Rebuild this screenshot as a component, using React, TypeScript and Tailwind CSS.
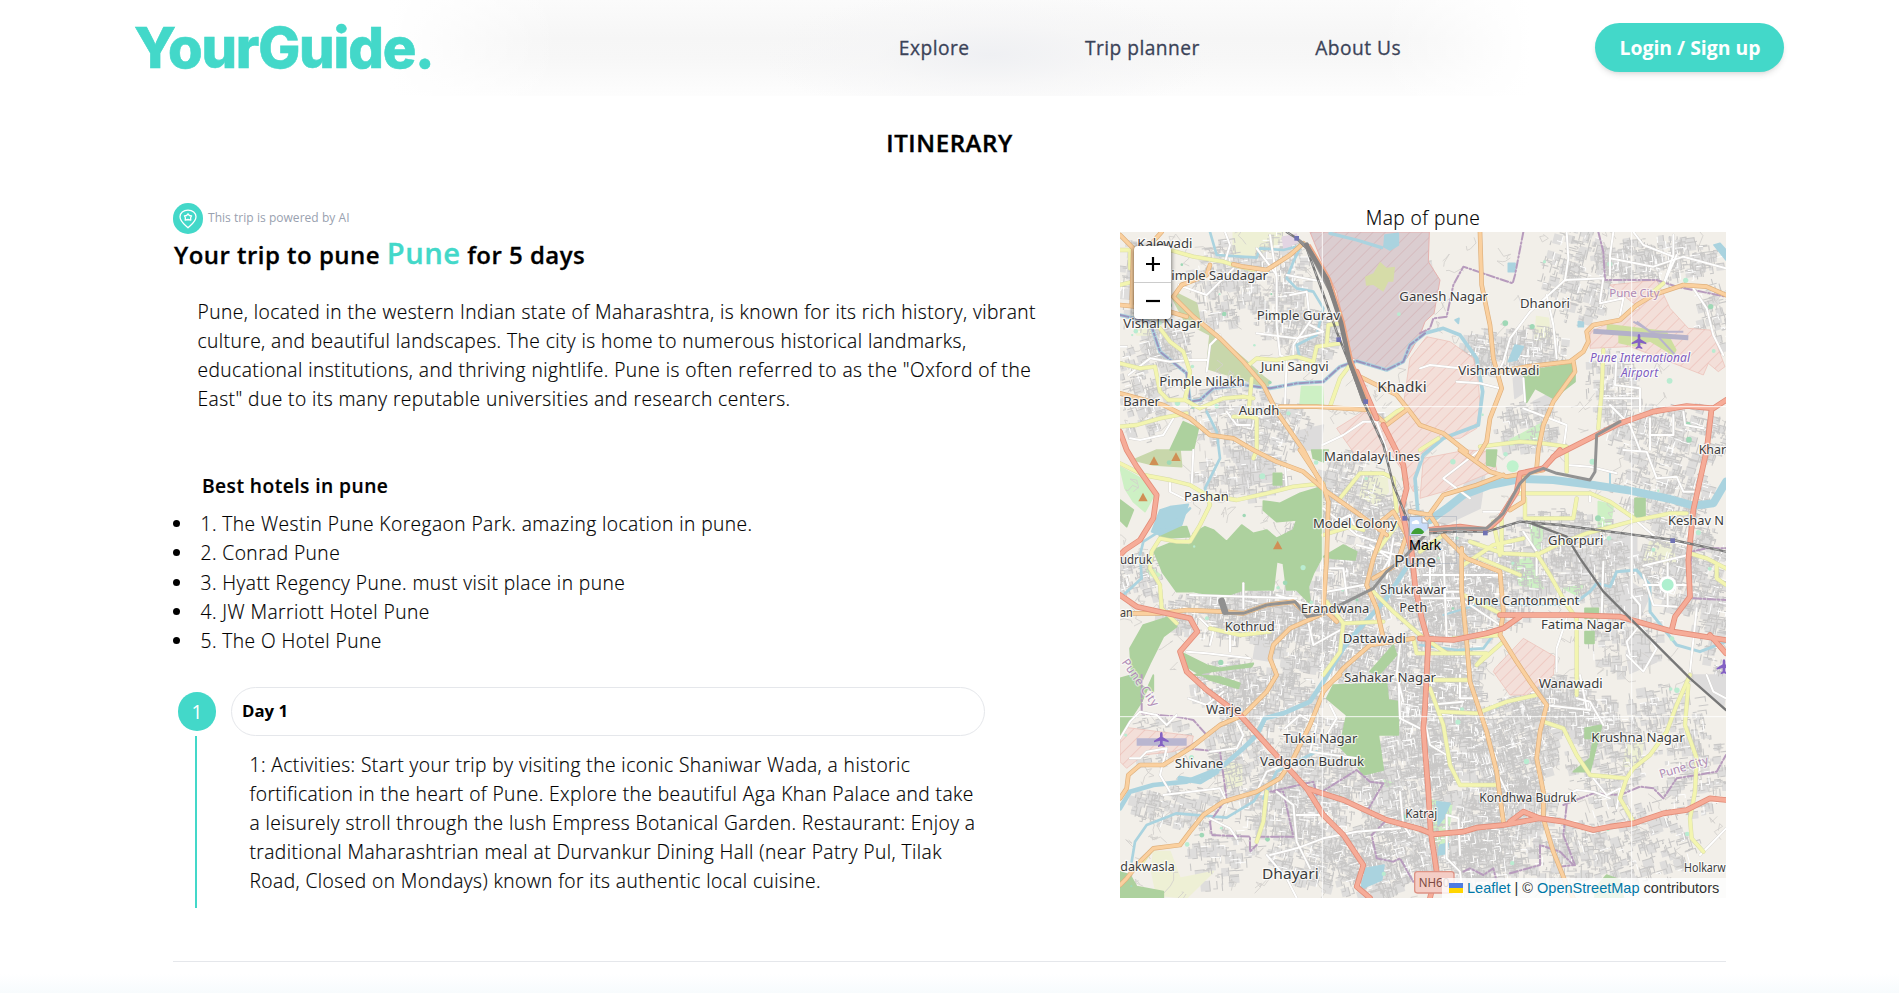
type Pt = string;

const rand = (seed: number) => () => {
  seed = (seed * 1664525 + 1013904223) % 4294967296;
  return seed / 4294967296;
};

// Built-up districts: cx, cy, rx, ry, density
const districts: [number, number, number, number, number][] = [
  [330, 170, 70, 110, 90], [500, 180, 70, 140, 150], [600, 330, 60, 70, 90], [90, 180, 60, 120, 60],
  [170, 350, 60, 60, 60], [360, 560, 110, 90, 90], [500, 600, 90, 70, 70], [100, 480, 70, 120, 70],
  [1260, 370, 90, 60, 120], [1110, 380, 40, 60, 60], [1400, 150, 90, 120, 110], [1640, 100, 160, 60, 170],
  [1800, 280, 50, 100, 40], [1500, 480, 60, 90, 80], [1250, 600, 80, 60, 60], [1680, 620, 160, 80, 160],
  [800, 620, 60, 50, 60], [390, 740, 120, 60, 80], [720, 800, 80, 110, 160], [560, 960, 40, 60, 40],
  [440, 1160, 240, 70, 340], [620, 1230, 120, 90, 200], [740, 1080, 110, 90, 220], [840, 950, 90, 120, 240],
  [960, 1090, 150, 90, 320], [1100, 1100, 150, 110, 280], [1350, 980, 160, 110, 260], [1000, 960, 80, 60, 80],
  [760, 1290, 120, 80, 170], [980, 1320, 110, 120, 260], [1500, 1060, 100, 90, 90], [1720, 1010, 110, 120, 200],
  [1650, 800, 130, 80, 110], [1820, 1200, 50, 120, 60], [470, 1420, 130, 80, 190], [350, 1370, 90, 60, 90],
  [640, 1600, 150, 110, 240], [1000, 1500, 110, 150, 360], [880, 1690, 120, 140, 300], [1200, 1560, 110, 120, 330],
  [1080, 1880, 130, 80, 300], [1180, 1740, 120, 80, 240], [1330, 1420, 100, 60, 140], [1440, 1480, 80, 60, 120],
  [800, 1900, 120, 90, 220], [560, 1740, 140, 90, 190], [380, 1600, 80, 110, 100], [210, 1740, 130, 50, 70],
  [1480, 1600, 100, 110, 100], [1650, 1480, 110, 90, 80], [1350, 1880, 120, 90, 90], [1560, 1850, 160, 110, 110],
  [1740, 1640, 100, 110, 80], [640, 1880, 130, 80, 130], [340, 1880, 90, 80, 50], [130, 1540, 90, 60, 40],
  [90, 1050, 60, 60, 50], [1540, 1240, 90, 90, 60], [900, 120, 40, 60, 20], [900, 1440, 100, 60, 120],
];

const streets = (() => {
  const r = rand(77);
  let light = "";
  let dark = "";
  let block = "";
  districts.forEach(([cx, cy, rx, ry, n]) => {
    const tilt = (r() - 0.5) * 0.6;
    for (let i = 0; i < n * 2; i++) {
      const a = r() * 6.283;
      const q = Math.pow(r(), 0.6);
      const x = cx + Math.cos(a) * rx * q * 1.2;
      const y = cy + Math.sin(a) * ry * q * 1.2;
      const t = tilt + (r() > 0.5 ? 1.571 : 0);
      const l = 8 + r() * 24;
      const dx = Math.cos(t) * l;
      const dy = Math.sin(t) * l;
      const s = `M${x.toFixed(0)} ${y.toFixed(0)}l${dx.toFixed(0)} ${dy.toFixed(0)}${r() > 0.6 ? `l${(-dy / 2).toFixed(0)} ${(dx / 2).toFixed(0)}` : ""}`;
      if (r() > 0.9) light += s;
      else dark += s;
      if (i % 3 === 0) block += `M${x.toFixed(0)} ${y.toFixed(0)}l${dx.toFixed(0)} ${dy.toFixed(0)}l${(-dy * 0.9).toFixed(0)} ${(dx * 0.9).toFixed(0)}l${(-dx).toFixed(0)} ${(-dy).toFixed(0)}z`;
    }
  });
  return { light, dark, block };
})();

const lanes = (() => {
  const r = rand(9);
  let d = "";
  for (let i = 0; i < 420; i++) {
    let x = 30 + r() * 1818;
    let y = 21 + r() * 1998;
    d += `M${x.toFixed(0)} ${y.toFixed(0)}`;
    for (let k = 0; k < 4; k++) {
      x = (r() - 0.5) * 50;
      y = (r() - 0.5) * 50;
      d += `l${x.toFixed(0)} ${y.toFixed(0)}`;
    }
  }
  return d;
})();

const forests: Pt[] = [
  "130,975 180,955 240,960 250,925 285,905 310,915 350,950 395,900 430,925 470,915 500,940 550,915 560,885 500,890 460,855 460,828 510,835 570,805 637,785 637,995 610,1045 595,1085 600,1135 560,1095 530,1095 520,1015 500,1010 490,1095 400,1095 340,1115 250,1100 200,1100 160,1045",
  "30,825 70,855 50,905 30,885", "145,910 230,905 240,935 150,940",
  "100,1200 180,1175 200,1205 160,1235 120,1315 90,1380 130,1400 130,1350 95,1430 30,1530 30,1360 65,1350 60,1270",
  "210,1280 290,1320 330,1330 430,1315 425,1325 300,1340 250,1350 330,1355 390,1375 385,1390 300,1365 230,1325",
  "670,1380 830,1375 835,1425 865,1430 865,1530 805,1530 820,1635 760,1650 740,1620 690,1565 710,1470 650,1420",
  "640,995 700,960 740,980 735,1005 670,1000", "780,1340 850,1260 860,1290 810,1345",
  "1240,440 1395,415 1395,470 1330,520 1275,490 1250,532 1245,500", "1425,1150 1465,1150 1465,1180 1425,1180",
  "1425,1220 1452,1220 1452,1255 1425,1255", "1575,820 1605,820 1605,875 1575,875",
  "1130,675 1160,675 1155,725 1130,720", "605,675 655,675 640,710 610,700", "1425,1510 1475,1500 1455,1580 1440,1640 1390,1640 1440,1600 1450,1540 1425,1540",
  "30,1940 60,1950 80,1985 160,2000 160,2019 30,2019", "1455,1990 1490,1950 1530,1965 1540,2019 1455,2019",
  "180,675 220,590 265,610 250,675", "490,745 515,745 515,780 490,780",
];

const sages: Pt[] = [
  "185,215 200,205 260,235 270,290 400,400 460,455 480,470 470,490 420,470 290,430 300,330 225,290",
  "70,705 140,675 210,675 215,725 130,720", "360,1025 410,1015 405,1065 375,1070",
];

const meadows: Pt[] = [
  "370,21 520,21 500,60 440,90 370,90", "760,760 830,755 835,800 800,840 750,815", "1280,275 1315,280 1320,340 1275,345",
  "130,1880 180,1880 210,1960 310,1940 230,2019 140,2010 125,1940", "340,1610 395,1620 395,1680 350,1690",
  "1620,950 1680,955 1700,1010 1600,1010", "1550,1560 1600,1550 1590,1620 1540,1625", "90,260 130,260 120,330 80,330",
];

const limes: Pt[] = [
  "575,485 637,485 640,540 570,540", "1200,645 1295,595 1290,650 1200,660", "1260,900 1300,905 1290,970 1270,970",
  "1200,1010 1260,1000 1300,1090 1230,1080", "30,725 110,770 130,815 105,860 70,830 45,790", "1465,830 1510,840 1500,905 1465,905",
  "965,1725 1025,1740 1010,1860 990,1890 965,1820", "820,1665 850,1675 830,1685", "1360,1090 1420,1080 1400,1110",
  "115,1020 150,1050 135,1060 110,1040",
];

const greys: Pt[] = [
  "355,1025 400,1010 440,1005 450,1065 360,1065", "1500,930 1580,930 1580,1022 1500,1022", "1490,1100 1560,1070 1620,1110 1580,1200 1500,1180",
  "1560,1240 1600,1240 1640,1310 1560,1345 1550,1290", "1380,980 1440,970 1460,1040 1400,1060", "1100,700 1130,710 1110,850 960,920 1040,830",
  "340,140 370,150 360,200 330,190", "440,1240 490,1240 490,1310 430,1300", "560,620 640,600 630,675 560,675",
  "1270,530 1330,500 1330,560 1275,560", "1380,1500 1430,1505 1430,1545 1380,1540", "1680,990 1740,985 1740,1030 1690,1040",
  "280,1870 320,1870 320,1895 280,1895", "360,675 500,690 480,760 400,790 390,740", "1210,460 1240,440 1245,500 1215,520",
  "1740,1350 1840,1450 1848,1390 1848,1350", "130,300 200,340 210,380 160,380", "470,960 520,965 515,1000 480,1000",
];

const hatched: Pt[] = [
  "900,400 950,335 1020,350 1090,400 1105,470 1110,540 1100,610 1050,640 990,640 930,690 910,800 880,740 845,690 750,710 680,610 760,560 830,600 880,540",
  "940,700 1070,675 1150,680 1160,735 1000,800 930,820", "1155,1330 1240,1240 1335,1295 1330,1350 1250,1410 1200,1410 1150,1340",
  "1500,180 1640,165 1680,250 1735,310 1800,315 1815,345 1845,425 1825,440 1795,415 1780,450 1640,395 1560,365 1440,370 1440,320 1510,290 1590,250",
  "30,1505 250,1533 245,1560 190,1580 100,1590 50,1630 30,1610",
];

const minor: Pt[] = [
  "205,180 290,210 370,130", "480,30 500,160 500,300 510,390 530,400 525,540", "440,325 560,340 640,320 600,300",
  "530,150 640,170", "540,210 590,200 600,290 550,360 550,400", "345,21 360,60 345,110", "30,365 50,365",
  "55,450 120,400 180,410 240,405 290,405", "290,440 300,360 330,330", "440,70 500,150", "240,440 230,520",
  "60,640 90,645 160,630 190,580", "350,560 380,600 420,600", "637,660 700,630 760,590 800,590 830,675",
  "1370,21 1375,100 1365,165 1480,160 1470,230", "1365,165 1260,260 1200,340 1180,410 1170,430", "1310,210 1330,300 1340,400",
  "1510,21 1500,90 1500,150", "1500,100 1630,125 1720,95 1848,130", "1690,30 1690,90 1660,180 1700,90", "1570,21 1600,60 1690,95",
  "1750,190 1790,250 1810,330 1840,390", "1470,235 1540,220 1530,270", "1520,390 1515,480 1590,490 1590,560", "1470,520 1590,520",
  "1240,460 1245,530", "1240,550 1370,600 1360,675", "930,430 960,420 1050,430", "1040,470 1110,475 1170,490",
  "1620,580 1620,675", "1690,570 1690,630 1620,630", "1720,560 1725,600 1780,610", "1500,540 1560,600 1590,675",
  "180,760 180,800 240,830", "250,675 245,780", "525,720 530,790", "400,1075 400,1150", "240,1110 560,1120",
  "270,1180 310,1220 300,1260", "230,1280 290,1285 420,1300", "360,1220 360,1280", "500,1110 600,1140 640,1190",
  "590,1170 610,1260 700,1210", "640,850 740,930 800,950", "660,900 720,870 740,920", "660,1030 700,1030 710,1110",
  "740,960 860,990", "780,960 840,1000 810,1050", "850,940 830,1060", "650,1100 760,1080", "870,1260 860,1350 880,1430",
  "960,1000 960,1100 1050,1100", "1000,980 1010,1240", "940,1050 1180,1050", "930,1120 1050,1120 1170,1200", "1050,1000 1060,1170",
  "1120,860 1180,860 1230,800 1240,780", "1080,820 1000,760 1110,675", "1540,675 1610,680 1640,760", "1640,760 1700,755 1720,800 1760,800",
  "1370,720 1440,725 1520,745", "1480,1010 1475,1170", "1565,900 1565,1110 1590,1140 1590,1200 1550,1250 1560,1290", "1600,1050 1630,1140 1700,1145",
  "1600,1022 1735,990", "1600,1080 1650,1080", "1695,1080 1735,1080", "1673,1104 1673,1145", "1673,1055 1673,1015", "1570,880 1640,940 1730,960", "1240,920 1280,980 1280,1050",
  "1760,1150 1740,1340", "1440,830 1440,800", "1370,1180 1340,1270 1340,1340", "1550,1290 1600,1340 1640,1270 1590,1200",
  "30,1540 60,1490 90,1460 140,1470 170,1500 200,1470", "235,1420 290,1440 340,1400", "370,1470 400,1530 380,1570 300,1580",
  "60,1600 90,1600 110,1580 170,1570 150,1650 180,1700", "160,1710 330,1690 350,1730", "480,1890 560,1870 640,1840 740,1820 870,1810",
  "500,1700 550,1740 560,1850 600,1930", "470,1890 530,1960 560,2019", "440,1700 470,1640 520,1620", "525,1510 570,1470 620,1500 600,1580 740,1600",
  "660,1440 680,1480 650,1530", "560,1770 640,1770", "300,1780 360,1810 380,1840", "865,1350 870,1480 930,1510", "870,1700 880,1800 900,1830",
  "945,1490 960,1560 1010,1590", "950,1440 1060,1430", "1010,1900 1010,1770 1045,1780 1050,1890", "1160,1640 1190,1700",
  "1050,1350 1050,1420 1110,1420", "1400,1420 1440,1430 1480,1500", "1410,1350 1430,1450", "1300,1440 1440,1455", "1350,1720 1400,1695 1450,1700 1500,1720",
  "1450,1660 1490,1710 1530,1690 1520,1750", "1848,1810 1800,1860 1770,1890", "1790,1350 1810,1400 1848,1420", "1010,1900 1050,1940 1060,2019",
];

const yellow: Pt[] = [
  "180,75 250,95 340,110 370,120 430,135", "30,180 70,170", "30,75 60,75 60,130", "150,310 180,350 220,380 240,440 235,480 225,520",
  "30,415 90,430 135,425 150,500 175,525 225,525 270,550 340,520 400,515 430,520", "410,425 440,400 500,405 560,395 610,410 620,365 690,355",
  "650,360 655,300 690,295", "660,545 690,460 720,420", "30,605 80,600 150,580 230,565", "370,575 420,575 440,580 440,675 430,700",
  "425,460 415,570", "820,590 860,560 890,545", "930,675 985,640", "1110,665 1230,650 1300,655 1370,665", "1480,375 1475,500 1465,610",
  "1630,200 1660,175", "30,715 100,750 180,765 240,780 290,810 300,840 270,900 240,950 200,950 150,940 125,980 120,1030 150,1080 155,1150 200,1195",
  "290,810 380,825 470,805 550,785 640,775", "300,1210 390,1230 480,1220", "690,820 750,745 820,745 850,760 860,860", "640,930 720,905 760,915",
  "650,1130 700,1195 820,1190", "700,1195 690,1280 640,1350", "790,1100 850,1160 930,1230 1010,1285", "910,1240 920,1285 1130,1285 1100,1320 1180,1250",
  "1220,805 1350,805 1440,805 1500,830 1580,885", "1245,820 1245,880 1300,880 1390,880 1400,820", "1370,675 1370,740", "1175,880 1175,980",
  "1150,890 1170,990", "1080,950 1180,985 1280,990 1340,960 1430,925 1580,885 1680,865 1730,865", "1060,1020 1150,960 1240,940", "1110,1000 1230,1050",
  "1280,985 1320,1050 1370,1140 1400,1180 1400,1350", "1740,985 1790,1000 1848,1030", "1820,1020 1820,1060 1848,1080", "1060,1110 1180,1170",
  "1030,1240 1170,1230", "950,1365 1080,1365", "960,1390 1000,1500 1020,1620 1050,1680 1160,1680", "990,1460 1100,1465 1190,1430 1280,1410",
  "1300,1490 1360,1510 1400,1590 1440,1650 1550,1660 1570,1630 1620,1590 1670,1520 1700,1440 1740,1350", "1550,1660 1530,1720 1570,1790",
  "1735,1380 1725,1500 1760,1600 1755,1700 1740,1780 1745,1840 1780,1880", "470,1700 460,1790 440,1850", "120,1880 90,1920", "800,980 860,900",
  "930,980 1000,930", "1400,1350 1400,1410",
];

const orange: Pt[] = [
  "580,55 540,90 470,135 400,125 370,118", "30,30 70,70 65,240", "215,180 190,215 250,275 330,340 400,410 460,480 500,560 580,675 630,770",
  "30,240 80,245 180,260 230,275", "155,21 120,60", "215,180 290,150 300,120", "30,505 160,540 240,580 300,630 370,640 430,675 500,710 580,740 650,800 750,870 830,930",
  "510,545 620,545 780,555 820,590", "740,450 800,480 860,510 900,560 930,600 1000,625 1070,680", "830,600 890,555",
  "1110,21 1115,180 1140,300 1150,400 1175,490 1140,580 1130,650 1100,700", "1165,440 1250,425 1380,410 1420,380 1435,350 1430,320 1450,300 1530,285 1580,240 1630,210 1720,180 1790,185 1848,210",
  "1390,410 1395,440 1330,530 1300,600 1285,675 1280,730", "1050,675 1140,740 1190,755 1250,745 1300,735", "570,675 640,780 655,830 650,1000 640,1150 680,1190",
  "30,1165 150,1165 230,1155 340,1160", "830,890 790,1000 770,1080 800,1150 820,1240", "790,1060 860,1020 890,930 850,860 800,900",
  "340,1160 400,1165 470,1140 550,1130 600,1175", "640,1165 540,1210 490,1260 480,1300 500,1350 470,1400 400,1470 330,1500 240,1570 160,1620 90,1620 55,1650 50,1690 30,1720",
  "950,880 1000,810 1100,780 1180,750", "1000,930 1070,1000 1170,1040 1180,1160 1170,1230 1220,1310 1260,1370 1310,1440 1290,1520 1280,1600 1300,1700 1300,1780 1330,1880 1370,1980 1390,2019",
  "1055,970 1055,1100 1070,1250 1080,1370 1130,1520 1160,1640 1180,1790", "780,1260 700,1330 640,1400 600,1500 550,1600 510,1660 440,1700 340,1730 280,1770 240,1820 210,1860 130,1870 90,1910 50,1960 30,1980",
  "1200,855 1240,830 1240,760", "780,1260 850,1250 910,1240", "900,860 960,870 980,900", "690,1350 640,1390",
];

const trunk: Pt[] = [
  "30,620 50,675 80,725 140,810 130,880 90,945 45,975 30,990", "30,1110 80,1145 170,1165 240,1180 262,1220 210,1280 230,1340 290,1395 390,1470 480,1570 590,1690 640,1770 700,1830 760,1920 740,1985 780,2019",
  "590,1690 700,1725 830,1785 930,1812 970,1828 1060,1820 1100,1808 1180,1800 1290,1780 1360,1790 1450,1815 1500,1805 1570,1795 1660,1765 1730,1755 1800,1720 1848,1725",
  "1200,1790 1240,1760 1290,1780", "820,600 850,660 880,720 890,790 875,850 890,920 905,980 915,1080 935,1180 955,1250 950,1350 945,1450 940,1510 955,1700 962,1820 980,1940 960,2019",
  "930,1240 1030,1245 1130,1225 1180,1210 1230,1175", "1170,1170 1380,1170 1530,1175 1690,1220 1848,1245", "1800,1230 1848,1285",
  "1790,675 1750,855 1735,1005 1740,1115 1695,1175 1685,1215", "1330,695 1470,625 1530,595 1630,560 1730,543 1810,550 1848,525", "1805,550 1790,675",
  "1300,730 1350,675", "950,915 1050,905 1130,915 1170,880 1220,800 1230,745 1300,730", "740,440 800,580",
];

const metro: Pt[] = [
  "335,1125 350,1165 400,1165 470,1140 555,1130 590,1175 640,1165 700,1135 790,1090 830,1040 880,1000 945,930",
  "950,915 1040,910 1130,910 1180,865 1230,775 1260,745 1300,730 1340,745 1440,765 1455,740 1460,630 1530,590",
  "560,40 585,60 620,120 660,200 700,300 715,400 760,530",
];

const rails: Pt[] = [
  "530,21 560,40 590,70 630,180 680,320 720,420 760,530 820,660 850,780 890,880 950,925 1040,920 1130,920 1230,890 1350,900 1500,920 1690,945 1848,980",
  "1250,890 1370,935 1410,1000 1480,1100 1600,1220 1740,1360 1848,1455",
];

const river = ["960,885 1010,850 1060,810 1140,780 1230,762 1330,765 1450,780 1560,797 1680,822 1750,842 1810,835 1848,770"];
const streams: [Pt, number][] = [
  ["30,270 120,290 150,380 230,445 240,530 270,525 310,490 400,480 480,490 560,475 640,470 690,425 740,408 830,435 880,410 900,360 945,325 1000,310 1050,330 1100,400 1118,500 1105,600 1000,640 940,690 915,760 925,880 965,885", 11],
  ["300,21 320,90 440,98 450,70 520,75 580,60", 8], ["570,70 550,110 530,160 560,190 610,200 640,250 620,330 560,360 570,400", 8],
  ["290,560 320,620 330,700 310,740 285,790 300,830", 8], ["240,850 210,880 100,950 90,990 95,1060 40,1110", 8],
  ["30,1750 60,1700 130,1680 230,1670 330,1630 400,1570 440,1530 465,1480 520,1465 600,1430 640,1370 700,1270 740,1220 830,1120 900,1010", 14],
  ["65,1910 75,1850 110,1800 200,1765 350,1778 430,1730 450,1700", 8], ["1400,1130 1440,1100 1460,1075 1500,1085 1520,1040 1580,1035 1620,1080 1620,1160 1660,1210 1700,1260 1770,1280 1848,1250", 9],
  ["660,25 740,45 815,68", 10], ["1000,1170 1100,1140 1350,1140", 6], ["930,1260 1040,1275 1120,1270 1150,1230", 8], ["1500,740 1500,790", 6],
  ["620,1580 560,1610 500,1640 460,1720", 9], ["210,1660 270,1670 320,1640", 16],
];
const lakes: Pt[] = [
  "125,920 150,855 180,845 235,838 215,900 150,930", "768,1930 822,1920 815,1965 752,1992", "825,30 865,25 865,60 840,75 822,65",
  "1215,360 1240,365 1220,405 1195,410", "1195,115 1215,115 1215,140 1195,140", "1405,290 1420,292 1420,305 1405,305", "1812,60 1830,55 1848,75 1848,105",
  "980,1730 1020,1735 1000,1780 985,1800", "990,1860 1015,1855 1010,1885 985,1890", "1035,285 1047,280 1045,295",
];
const borders: Pt[] = [
  "1240,21 1215,150 1208,175 1060,125 1030,180 1010,275 970,280 960,310 930,325", "1465,21 1480,80 1485,165 1640,165 1700,185 1848,215",
  "95,1350 95,1465 200,1475 250,1485 290,1530 230,1570 330,1580 350,1720 300,1790 305,1830 420,1835 420,1880 440,1860",
  "440,1835 550,1835 520,1700 480,1700 610,1670 620,1710 740,1635 780,1670 820,1675 770,1760 830,1785 785,1830 800,1900 850,1910 870,1900 910,1970",
  "1060,1940 1080,1930 1120,1950 1150,1930 1160,1970", "1200,1945 1290,1920 1290,1860 1350,1880 1390,1920", "1360,1740 1450,1705 1530,1710 1590,1685 1630,1690 1660,1720 1700,1660 1820,1640 1848,1590",
  "1370,1740 1360,1830 1395,1920 1350,1925", "1740,1050 1745,980 1790,970 1848,970", "1750,1120 1848,1125",
];

const labels: [number, number, string, number, number][] = [
  [82, 68, "Kalewadi", 165, 38], [160, 166, "Pimple Saudagar", 314, 38], [40, 309, "Vishal Nagar", 236, 38], [440, 285, "Pimple Gurav", 250, 38],
  [452, 437, "Juni Sangvi", 204, 38], [148, 484, "Pimple Nilakh", 256, 38], [40, 542, "Baner", 110, 38], [386, 571, "Aundh", 122, 38],
  [802, 501, "Khadki", 148, 44], [868, 228, "Ganesh Nagar", 266, 38], [1230, 248, "Dhanori", 150, 38], [1045, 451, "Vishrantwadi", 243, 38],
  [642, 709, "Mandalay Lines", 288, 38], [222, 827, "Pashan", 134, 38], [609, 910, "Model Colony", 252, 38], [30, 1016, "udruk", 96, 38],
  [30, 1175, "an", 38, 38], [344, 1218, "Kothrud", 150, 38], [572, 1163, "Erandwana", 206, 38], [852, 1025, "Pune", 126, 50],
  [810, 1108, "Shukrawar", 198, 38], [868, 1160, "Peth", 84, 38], [698, 1253, "Dattawadi", 190, 38], [702, 1370, "Sahakar Nagar", 276, 38],
  [1070, 1139, "Pune Cantonment", 338, 38], [1293, 1211, "Fatima Nagar", 252, 38], [1314, 960, "Ghorpuri", 166, 38], [1674, 901, "Keshav N", 168, 38],
  [1766, 688, "Khar", 82, 38], [1286, 1390, "Wanawadi", 192, 38], [288, 1466, "Warje", 106, 38], [520, 1553, "Tukai Nagar", 222, 38],
  [450, 1624, "Vadgaon Budruk", 312, 38], [194, 1629, "Shivane", 146, 38], [31, 1938, "dakwasla", 163, 38], [456, 1961, "Dhayari", 170, 45],
  [886, 1780, "Katraj", 96, 38], [1108, 1732, "Kondhwa Budruk", 292, 38], [1444, 1551, "Krushna Nagar", 280, 38], [1722, 1941, "Holkarw", 125, 38],
];

const trees = (() => {
  const r = rand(31);
  return Array.from({ length: 90 }, () => [40 + r() * 1790, 30 + r() * 1960, 3 + r() * 6]);
})();

const Lines = ({ list, color, width, dash }: { list: Pt[]; color: string; width: number; dash?: string }) => (
  <g fill="none" stroke={color} strokeWidth={width} strokeLinejoin="round" strokeLinecap="round" strokeDasharray={dash}>
    {list.map((p, i) => <polyline key={i} points={p} />)}
  </g>
);

const Areas = ({ list, fill, stroke }: { list: Pt[]; fill: string; stroke?: string }) => (
  <g fill={fill} stroke={stroke ?? fill} strokeWidth={stroke ? 2 : 5} strokeLinejoin="round">
    {list.map((p, i) => <polygon key={i} points={p} />)}
  </g>
);

const Plane = ({ x, y }: { x: number; y: number }) => (
  <path transform={`translate(${x} ${y})`} fill="#8461c4" d="M0-22c3 0 4 4 4 8v7l18 11v5L4 4v10l6 5v4L0 20l-10 3v-4l6-5V4l-18 5V4L-4-7v-7c0-4 1-8 4-8z" />
);

function CityMap() {
  return (
    <svg viewBox="30 21 1818 1998" preserveAspectRatio="none" className="block h-full w-full">
      <defs>
        <pattern id="hatch" width="26" height="26" patternUnits="userSpaceOnUse" patternTransform="rotate(45)">
          <path d="M0 0V26" stroke="#e9b5ad" strokeWidth="3" />
        </pattern>
        <pattern id="range" width="26" height="26" patternUnits="userSpaceOnUse" patternTransform="rotate(45)">
          <path d="M0 0V26" stroke="#d3b3b7" strokeWidth="4" />
        </pattern>
      </defs>
      <rect x="30" y="21" width="1818" height="1998" fill="#f2efe9" />
      <path d={streets.block} fill="#dedddc" />
      <Areas list={greys} fill="#dddcdc" />
      <Areas list={meadows} fill="#eef0d5" />
      <Areas list={sages} fill="#c8d7ab" />
      <Areas list={limes} fill="#cdf0c4" />
      <path d={lanes} fill="none" stroke="#d3d0cc" strokeWidth="2.5" />
      <path d={streets.dark} fill="none" stroke="#c9c8c7" strokeWidth="3.2" />
      <path d={streets.light} fill="none" stroke="#ffffff" strokeWidth="3" />
      <Areas list={hatched} fill="#f3dfd9" stroke="#ecbdb4" />
      <Areas list={hatched} fill="url(#hatch)" stroke="none" />
      <Areas list={forests} fill="#add19e" />
      <g>
        <path d="M600 21H958L955 110L990 165L972 265L945 290L930 330L890 400L830 435L760 415L720 395L700 290L680 200L640 120Z" fill="#dbcdd0" stroke="#e6b1ae" strokeWidth="3" />
        <path d="M600 21H958L955 110L990 165L972 265L945 290L930 330L890 400L830 435L760 415L720 395L700 290L680 200L640 120Z" fill="url(#range)" />
        <path d="M765 155L790 145L810 110L830 128L855 125L850 170L835 170L820 200L790 180L768 182Z" fill="#d6dca8" />
        <path d="M515 35L560 25L570 50L520 75Z" fill="#e3d5e3" />
      </g>
      <path d="M1490 296L1670 318L1700 375L1690 392L1620 350L1575 365L1525 355V330L1490 322Z" fill="#cfdf9f" />
      <path d="M1570 290L1640 330L1700 395M1580 290L1620 320L1720 320" stroke="#b9b3cc" strokeWidth="6" fill="none" />
      <path d="M1450 319L1735 338" stroke="#b4b1c9" strokeWidth="15" />
      <path d="M80 1551H230" stroke="#b9b6d0" strokeWidth="22" />
      <Areas list={lakes} fill="#aad3df" />
      {streams.map(([p, w], i) => <Lines key={i} list={[p]} color="#aad3df" width={w} />)}
      <Lines list={["30,270 120,290 150,380 230,445 240,530 270,525 310,490 400,480 480,490 560,475 640,470 690,425 740,408 830,435 880,410 900,360 945,325"]} color="#9a94bd" width={6} dash="26 8 6 8" />
      <Lines list={river} color="#aad3df" width={24} />
      {trees.map(([x, y, s], i) => <circle key={i} cx={x} cy={y} r={s} fill={i % 3 ? "#b9ecd1" : "#9fd8b6"} />)}
      <Lines list={borders} color="#b79bbd" width={6} dash="24 7 5 7" />
      <Lines list={minor} color="#d2cfcb" width={8} />
      <Lines list={minor} color="#ffffff" width={6} />
      <circle cx="1673" cy="1079" r="22" fill="#aef0cf" stroke="#fff" strokeWidth="8" />
      <circle cx="1208" cy="724" r="18" fill="#bff2cd" />
      <Lines list={yellow} color="#d8dba8" width={13} />
      <Lines list={yellow} color="#f3f5b0" width={10} />
      <Lines list={orange} color="#dfb07c" width={14} />
      <Lines list={orange} color="#fad09f" width={10} />
      <Lines list={trunk} color="#e38d79" width={17} />
      <Lines list={trunk} color="#f6ac98" width={12} />
      <Lines list={rails} color="#777777" width={7} />
      <Lines list={[rails[0]]} color="#b5b5b5" width={3} dash="16 14" />
      <Lines list={metro} color="#929292" width={9} />
      <Lines list={["590,60 650,160 690,280 720,410 765,530"]} color="#858281" width={15} />
      <Lines list={["600,60 660,160 702,290 728,410 775,530"]} color="#f0a683" width={5} />
      <path d="M335 1128L345 1160" stroke="#909090" strokeWidth="20" strokeLinecap="round" />
      <g fill="#7072b3">
        {[[560, 40], [686, 344], [767, 530], [884, 880], [1126, 924], [1688, 947]].map(([x, y]) => <rect key={x} x={x - 7} y={y - 7} width="14" height="14" />)}
      </g>
      <g fill="#d08f55">
        {[[132, 707], [198, 695], [99, 816], [503, 960]].map(([x, y]) => <path key={x} d={`M${x} ${y - 13}l14 26h-28z`} />)}
      </g>
      <path d="M637 21V2019M1565 21V2019M30 545H1848M30 1475H1848" stroke="#ffffff" strokeOpacity=".85" strokeWidth="3" />
      <g fontFamily="'Noto Sans', sans-serif" fill="#3c3c3c" stroke="#fff" strokeOpacity=".75" strokeWidth="7" strokeLinejoin="round" style={{ paintOrder: "stroke" }}>
        {labels.map(([x, y, t, w, s]) => <text key={t} x={x} y={y} fontSize={s} textLength={w} lengthAdjust="spacingAndGlyphs">{t}</text>)}
        <g fill="#7d5cc0" fontStyle="italic">
          <text x="1440" y="412" fontSize="36" textLength="300">Pune International</text>
          <text x="1533" y="455" fontSize="36" textLength="112">Airport</text>
        </g>
        <g fill="#b08bb6" fontSize="35" strokeOpacity=".5">
          <text x="1498" y="215" textLength="150">Pune City</text>
          <text transform="translate(1652 1660) rotate(-17)" textLength="152">Pune City</text>
          <text transform="translate(34 1312) rotate(55)" textLength="165">Pune City</text>
        </g>
      </g>
      <Plane x={1587} y={349} />
      <Plane x={154} y={1543} />
      <Plane x={1842} y={1325} />
      <rect x="914" y="1940" width="118" height="64" rx="8" fill="#f4cdc5" stroke="#dd9385" strokeWidth="4" />
      <text x="926" y="1985" fontSize="36" textLength="92" lengthAdjust="spacingAndGlyphs" fill="#7d4b42" fontFamily="'Noto Sans', sans-serif">NH60</text>
    </svg>
  );
}

function BrokenImage() {
  return (
    <svg viewBox="0 0 20 20" className="block h-5 w-5">
      <path d="M.5.5H13l6 6v13H.5z" fill="#c8dcf8" stroke="#a8b0bb" />
      <path d="M13 .5V7h6" fill="#fff" stroke="#a8b0bb" />
      <path d="M3 8a2 2 0 0 1 2-3 3 3 0 0 1 5 1 1.500 1.500 0 0 1 0 2z" fill="#fff" />
      <path d="M2 18c1-3 4-6 7-6s6 3 7 6z" fill="#3f9f35" />
      <path d="M11 20l9-8v8z" fill="#e9ece6" />
    </svg>
  );
}

const hotels = [
  "1. The Westin Pune Koregaon Park. amazing location in pune.",
  "2. Conrad Pune",
  "3. Hyatt Regency Pune. must visit place in pune",
  "4. JW Marriott Hotel Pune",
  "5. The O Hotel Pune",
];

export default function App() {
  return (
    <div className="flex h-[993px] w-[1899px] flex-col overflow-hidden bg-white font-['Open_Sans',sans-serif] text-[19.2px] leading-[29px] text-black">
      <header className="flex h-24 shrink-0 items-start bg-[radial-gradient(ellipse_230px_64px_at_990px_55px,#eff0f3_0%,rgba(245,245,246,0.6)_50%,transparent_100%),linear-gradient(to_right,white_390px,transparent_560px,transparent_1380px,white_1530px),linear-gradient(to_bottom,#fbfbfb_0%,#f6f6f6_40%,#f7f7f7_60%,#fdfdfd_100%)] pt-[23px] pr-[115px] pl-[134px]">
        <div className="-mt-[3px] font-['Inter',sans-serif] text-[56px] leading-none font-extrabold tracking-[-1.2px] text-[#43d8c9] [-webkit-text-stroke:0.6px]">YourGuide.</div>
        <nav className="ml-auto flex h-[49px] items-center gap-[115.500px] font-medium tracking-[0.45px] text-[#3b4358] [-webkit-text-stroke:0.3px_#3b4358]">
          <a>Explore</a>
          <a>Trip planner</a>
          <a>About Us</a>
        </nav>
        <button className="ml-[194px] h-[49px] w-[189px] rounded-full bg-[#43d8c9] pb-px pl-px text-[19.400px] font-bold text-white shadow-md">Login / Sign up</button>
      </header>

      <h1 className="mt-[29px] text-center text-[24px] leading-9 font-semibold tracking-[0.6px] [-webkit-text-stroke:0.4px]">ITINERARY</h1>

      <main className="mx-[173px] mt-[42px] flex h-[759px] shrink-0 justify-between border-b border-gray-200">
        <section className="w-[880px]">
          <div className="flex h-[31px] items-center">
            <span className="flex h-[31px] w-[30px] items-center justify-center rounded-full bg-[#43d8c9]">
              <svg viewBox="0 0 20 20" className="h-5 w-5" fill="none" stroke="#fff" strokeWidth="1.300" strokeLinejoin="round">
                <path d="M10 18.800C6.500 15.500 2 12.600 2 7.800 2 3.800 5.400 1.200 10 1.200s8 2.600 8 6.600c0 4.800-4.500 7.700-8 11z" />
                <path d="M10 4.800l1.400 1.700 2.200.3-1 2 .2 2.300-2.800-.6-2.800.6.2-2.300-1-2 2.200-.3z" />
              </svg>
            </span>
            <span className="mb-px ml-[5px] text-[12px] leading-4 tracking-[0.04px] text-gray-400">This trip is powered by AI</span>
          </div>
          <h2 className="mt-px ml-px h-9 text-[24px] leading-9 font-semibold tracking-[0.47px] whitespace-nowrap [-webkit-text-stroke:0.3px]">
            Your trip to pune <span className="text-[29.200px] text-[#43d8c9]">Pune</span> for 5 days
          </h2>
          <p className="mt-[26px] ml-[24.500px] w-[870px] font-light tracking-[0.44px] whitespace-nowrap [-webkit-text-stroke:0.18px]">
            Pune, located in the western Indian state of Maharashtra, is known for its rich history, vibrant<br />
            culture, and beautiful landscapes. The city is home to numerous historical landmarks,<br />
            educational institutions, and thriving nightlife. Pune is often referred to as the "Oxford of the<br />
            East" due to its many reputable universities and research centers.
          </p>
          <h3 className="mt-[58px] ml-[29px] font-semibold tracking-[0.45px] [-webkit-text-stroke:0.2px]">Best hotels in pune</h3>
          <ul className="mt-[9px] leading-[29.25px] font-light tracking-[0.44px] [-webkit-text-stroke:0.18px]">
            {hotels.map((h) => (
              <li key={h} className="flex items-center">
                <span className="mr-[20.500px] h-[7px] w-[7px] rounded-full bg-black" />
                {h}
              </li>
            ))}
          </ul>
          <div className="mt-[32px] flex">
            <div className="flex w-[58px] flex-col items-start">
              <span className="mt-[5px] ml-[5px] flex h-[39px] w-[38px] items-center justify-center rounded-full bg-[#43d8c9] text-white">1</span>
              <span className="mt-[5px] ml-[22px] h-[172px] w-[2px] bg-[#43d8c9]" />
            </div>
            <div className="w-[754px]">
              <div className="flex h-[49px] items-center rounded-full border border-gray-200 pb-[3px] pl-[10px] text-[16.800px] font-bold">Day 1</div>
              <p className="mt-[14px] ml-[18.500px] font-light tracking-[0.44px] whitespace-nowrap [-webkit-text-stroke:0.18px]">
                1: Activities: Start your trip by visiting the iconic Shaniwar Wada, a historic<br />
                fortification in the heart of Pune. Explore the beautiful Aga Khan Palace and take<br />
                a leisurely stroll through the lush Empress Botanical Garden. Restaurant: Enjoy a<br />
                traditional Maharashtrian meal at Durvankur Dining Hall (near Patry Pul, Tilak<br />
                Road, Closed on Mondays) known for its authentic local cuisine.
              </p>
            </div>
          </div>
        </section>

        <section className="w-[606px] text-center">
          <div className="h-[29px] font-light tracking-[0.44px] [-webkit-text-stroke:0.18px]">Map of pune</div>
          <div className="relative h-[666px] overflow-hidden text-left">
            <CityMap />
            <div className="absolute top-[14px] left-[14px] flex w-[37px] flex-col rounded-sm bg-white shadow-[0_1px_5px_rgba(0,0,0,0.65)]">
              {["M0 7H14M7 0V14", "M0 7H14"].map((d, i) => (
                <span key={d} className={i ? "flex h-9 items-center justify-center" : "flex h-[37px] items-center justify-center border-b border-[#ccc]"}>
                  <svg viewBox="0 0 14 14" className="h-[14px] w-[14px]"><path d={d} stroke="#000" strokeWidth="2.200" /></svg>
                </span>
              ))}
            </div>
            <div className="absolute top-[284px] left-[288px] h-12 w-[49px] border border-gray-400/40" />
            <div className="absolute top-[284px] left-[289px] w-[30px] font-['Liberation_Sans',sans-serif] text-[14.400px] leading-[19px]">
              <BrokenImage />
              <div>Mark</div>
            </div>
            <div className="absolute right-0 bottom-0 flex h-[20px] w-[284px] items-center bg-white/80 pl-[7px] font-['Liberation_Sans',sans-serif] text-[14.500px] leading-5 whitespace-pre text-[#333]">
              <svg viewBox="0 0 14 10" className="mr-1 h-[10px] w-[14px]"><path fill="#4c7be1" d="M0 0h14v5H0z" /><path fill="#ffd500" d="M0 5h14v5H0z" /></svg>
              <span className="text-[#0078a8]">Leaflet</span> | © <span className="text-[#0078a8]">OpenStreetMap</span> contributors
            </div>
          </div>
        </section>
      </main>
      <div className="mt-3 min-h-0 flex-1 bg-linear-to-b from-white to-[#f7fbfd]" />
    </div>
  );
}
